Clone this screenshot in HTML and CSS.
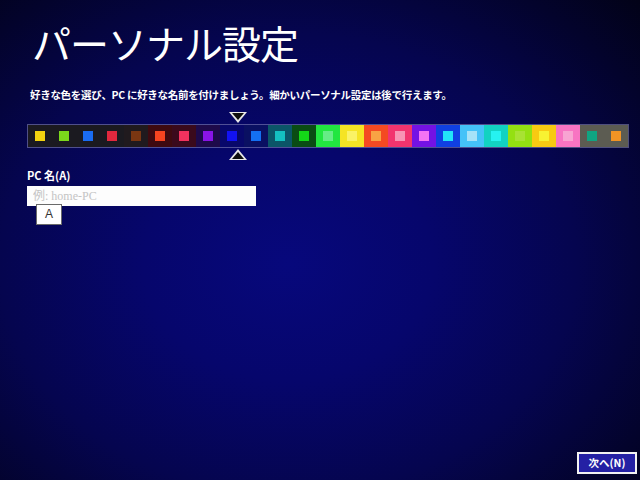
FILE: index.html
```html
<!DOCTYPE html>
<html lang="ja">
<head>
<meta charset="utf-8">
<title>パーソナル設定</title>
<link rel="stylesheet" href="styles.css">
</head>
<body>
<div class="screen">
  <h1 class="title">パーソナル設定</h1>
  <p class="subtitle">好きな色を選び、PC に好きな名前を付けましょう。細かいパーソナル設定は後で行えます。</p>

  <div class="picker">
    <span class="arrow arrow-down"></span>
    <div class="strip">
      <div class="cell c-dark"><i class="sq" style="background:#f2d20f"></i></div>
      <div class="cell c-dark"><i class="sq" style="background:#7bd81b"></i></div>
      <div class="cell c-dark"><i class="sq" style="background:#1a6cf2"></i></div>
      <div class="cell c-dark"><i class="sq" style="background:#e2283e"></i></div>
      <div class="cell c-dark2"><i class="sq" style="background:#7a3612"></i></div>
      <div class="cell c-red"><i class="sq" style="background:#f54420"></i></div>
      <div class="cell c-red2"><i class="sq" style="background:#f2325e"></i></div>
      <div class="cell c-purple"><i class="sq" style="background:#8a14e6"></i></div>
      <div class="cell c-navy"><i class="sq" style="background:#1212f2"></i></div>
      <div class="cell c-navy2"><i class="sq" style="background:#1470f2"></i></div>
      <div class="cell c-teal"><i class="sq" style="background:#14c0c0"></i></div>
      <div class="cell c-green"><i class="sq" style="background:#14d818"></i></div>
      <div class="cell" style="background:#22e640"><i class="sq" style="background:#66ec86"></i></div>
      <div class="cell" style="background:#f5e424"><i class="sq" style="background:#faf266"></i></div>
      <div class="cell" style="background:#f44a22"><i class="sq" style="background:#f8a444"></i></div>
      <div class="cell" style="background:#f2346e"><i class="sq" style="background:#f894b4"></i></div>
      <div class="cell" style="background:#7412e4"><i class="sq" style="background:#f474f4"></i></div>
      <div class="cell" style="background:#1040e2"><i class="sq" style="background:#22e4f8"></i></div>
      <div class="cell" style="background:#44c2f8"><i class="sq" style="background:#a6e2f8"></i></div>
      <div class="cell" style="background:#12d2c2"><i class="sq" style="background:#26f2f0"></i></div>
      <div class="cell" style="background:#94e012"><i class="sq" style="background:#a8e234"></i></div>
      <div class="cell" style="background:#f8ca12"><i class="sq" style="background:#f8f232"></i></div>
      <div class="cell" style="background:#f874c2"><i class="sq" style="background:#f8a4d2"></i></div>
      <div class="cell c-grey"><i class="sq" style="background:#10a482"></i></div>
      <div class="cell c-grey"><i class="sq" style="background:#f29424"></i></div>
    </div>
    <span class="arrow arrow-up"></span>
  </div>

  <label class="label" for="pcname">PC 名(A)</label>
  <div class="field">
    <input id="pcname" class="input" type="text" placeholder="例: home-PC">
    <span class="tip">A</span>
  </div>

  <button class="next" type="button">次へ(N)</button>
</div>
</body>
</html>
```

FILE: styles.css
```css
html, body {
  margin: 0;
  padding: 0;
  width: 640px;
  height: 480px;
  overflow: hidden;
}

body {
  background: radial-gradient(ellipse 75% 80% at 45% 55%, #07087c 0%, #06066c 30%, #05054f 60%, #03032c 85%, #020218 100%);
  color: #ffffff;
  font-family: "Noto Sans CJK JP", "Noto Sans", sans-serif;
}

.screen {
  height: 480px;
  box-sizing: border-box;
  display: flex;
  flex-direction: column;
  padding: 22px 0 0 0;
}

.title {
  margin: 0 0 0 32px;
  font-size: 39px;
  line-height: 40px;
  font-weight: 400;
  letter-spacing: -1px;
}

.subtitle {
  margin: 26px 0 0 30px;
  font-size: 10.5px;
  line-height: 14px;
  font-weight: 700;
  letter-spacing: -0.3px;
}

.picker {
  position: relative;
  margin: 23px 0 0 28px;
  width: 600px;
}

.strip {
  display: flex;
  height: 22px;
  box-shadow: 0 0 0 1px rgba(170, 170, 210, 0.45);
}

.cell {
  width: 24px;
  height: 22px;
  display: flex;
  align-items: center;
  justify-content: center;
  flex: none;
}

.sq {
  display: block;
  width: 10px;
  height: 10px;
}

.c-dark { background: #1b1a20; }
.c-dark2 { background: #201a1e; }
.c-red { background: #3e0a10; }
.c-red2 { background: #3a0a1c; }
.c-purple { background: #1e0a4a; }
.c-navy { background: #08086a; }
.c-navy2 { background: #0a1062; }
.c-teal { background: #0b5668; }
.c-green { background: #0a4c14; }
.c-grey { background: #5c5c52; }

.arrow {
  position: absolute;
  left: 201px;
  width: 0;
  height: 0;
  border-left: 9px solid transparent;
  border-right: 9px solid transparent;
}

.arrow::after {
  content: "";
  position: absolute;
  left: -6px;
  width: 0;
  height: 0;
  border-left: 6px solid transparent;
  border-right: 6px solid transparent;
}

.arrow-down {
  top: -13px;
  border-top: 11px solid #e8e8e8;
}

.arrow-down::after {
  top: -10px;
  border-top: 7px solid #0e0e0e;
}

.arrow-up {
  bottom: -13px;
  border-bottom: 11px solid #e8e8e8;
}

.arrow-up::after {
  bottom: -10px;
  border-bottom: 7px solid #0e0e0e;
}

.label {
  margin: 21px 0 0 27px;
  font-size: 11px;
  line-height: 14px;
  font-weight: 700;
}

.field {
  position: relative;
  margin: 4px 0 0 27px;
  width: 229px;
}

.input {
  display: block;
  box-sizing: border-box;
  width: 229px;
  height: 20px;
  margin: 0;
  border: none;
  outline: none;
  background: #fdfdfd;
  padding: 0 0 0 6px;
  font-family: "Liberation Serif", "Noto Sans CJK JP", serif;
  font-size: 12px;
  color: #222222;
}

.input::placeholder {
  color: #c4c4c4;
}

.tip {
  position: absolute;
  left: 9px;
  top: 18px;
  width: 26px;
  height: 21px;
  box-sizing: border-box;
  background: #ffffff;
  border: 1px solid #6a6a6a;
  color: #333333;
  font-family: "Liberation Sans", sans-serif;
  font-size: 12px;
  line-height: 19px;
  text-align: center;
}

.next {
  margin: auto 3px 6px 0;
  align-self: flex-end;
  width: 60px;
  height: 22px;
  box-sizing: border-box;
  background: #2420a4;
  border: 2px solid #f2f2f2;
  color: #ffffff;
  font-family: "Noto Sans CJK JP", sans-serif;
  font-size: 10.5px;
  font-weight: 700;
  line-height: 16px;
  padding: 0;
}
```
